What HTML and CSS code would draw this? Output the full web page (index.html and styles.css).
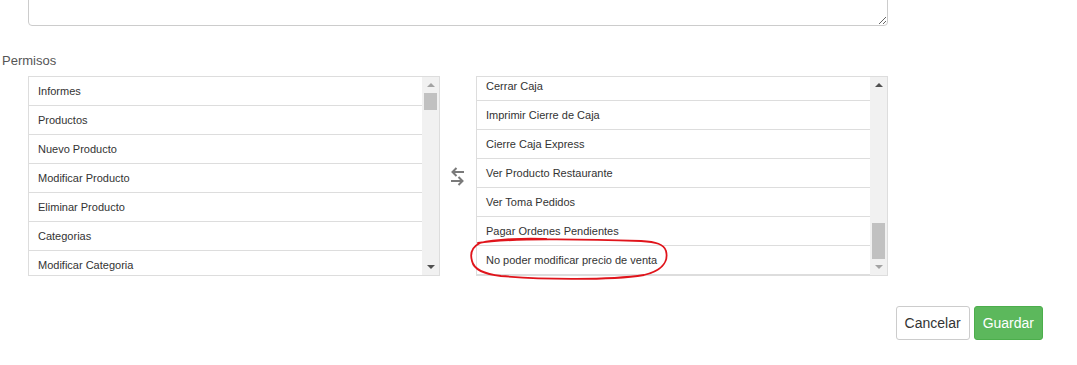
FILE: index.html
```html
<!DOCTYPE html>
<html lang="es">

<head>
  <meta charset="UTF-8">
  <meta name="viewport" content="width=device-width, initial-scale=1.0">
  <title>Permisos</title>
  <link rel="stylesheet" href="styles.css">
</head>

<body>
  <form class="page">
    <div class="notes-wrap">
      <textarea class="notes" name="Notas"></textarea>
    </div>

    <label class="perm-label">Permisos</label>

    <div class="dual-list">
      <div class="list-box">
        <ul class="items">
          <li>Informes</li>
          <li>Productos</li>
          <li>Nuevo Producto</li>
          <li>Modificar Producto</li>
          <li>Eliminar Producto</li>
          <li>Categorias</li>
          <li>Modificar Categoria</li>
        </ul>
        <div class="scrollbar at-top">
          <span class="arrow up off"></span>
          <div class="track"><div class="thumb small"></div></div>
          <span class="arrow down"></span>
        </div>
      </div>

      <div class="swap">
        <svg width="16" height="22" viewBox="0 0 16 22">
          <path d="M14 6 H2.5 M6.5 2 L2.5 6 L6.5 10" fill="none" stroke="#7a7a7a" stroke-width="2"/>
          <path d="M1 15 H12.5 M8.5 11 L12.5 15 L8.5 19" fill="none" stroke="#7a7a7a" stroke-width="2"/>
        </svg>
      </div>

      <div class="list-box">
        <ul class="items bottom">
          <li>Cerrar Caja</li>
          <li>Imprimir Cierre de Caja</li>
          <li>Cierre Caja Express</li>
          <li>Ver Producto Restaurante</li>
          <li>Ver Toma Pedidos</li>
          <li>Pagar Ordenes Pendientes</li>
          <li>No poder modificar precio de venta</li>
        </ul>
        <div class="scrollbar at-bottom">
          <span class="arrow up"></span>
          <div class="track"><div class="thumb big"></div></div>
          <span class="arrow down off"></span>
        </div>
      </div>
    </div>

    <div class="actions">
      <button type="button" class="btn btn-default">Cancelar</button>
      <button type="submit" class="btn btn-success">Guardar</button>
    </div>

    <!-- marca roja sobre el permiso nuevo -->
    <svg class="mark" width="220" height="50" viewBox="0 0 220 50">
      <path d="M12 6 C40 1 120 2 175 4 C190 5 198 7 200 14 C203 26 194 34 178 38 C140 44 70 42 35 39 C18 37 8 33 6 24 C4 17 6 10 14 6 C30 2 60 1 80 2"
        fill="none" stroke="#e0141b" stroke-width="1.8" stroke-linecap="round"/>
    </svg>
  </form>
</body>

</html>
```

FILE: styles.css
```css
/* Page */

body {
  margin: 0;
  font-family: "Liberation Sans", Arial, sans-serif;
  color: #333;
  background: #fff;
}

.page {
  position: relative;
  width: 1077px;
  height: 365px;
}

/* Textarea, only its lower edge is on screen */

.notes-wrap {
  height: 26px;
  margin-left: 28px;
  width: 860px;
  overflow: hidden;
  display: flex;
  flex-direction: column;
  justify-content: flex-end;
}

.notes {
  flex: none;
  height: 80px;
  width: 100%;
  box-sizing: border-box;
  border: 1px solid #ccc;
  border-radius: 4px;
  resize: vertical;
}

.perm-label {
  display: block;
  margin: 26px 0 0 2px;
  font-size: 13px;
  line-height: 18px;
  color: #555;
}

/* Dual list */

.dual-list {
  display: flex;
  align-items: center;
  margin: 6px 0 0 28px;
}

.list-box {
  display: flex;
  width: 412px;
  height: 200px;
  box-sizing: border-box;
  border: 1px solid #ddd;
  overflow: hidden;
}

.items {
  flex: 1;
  display: flex;
  flex-direction: column;
  margin: 0;
  padding: 0;
  list-style: none;
  overflow: hidden;
}

.items.bottom {
  justify-content: flex-end;
}

.items li {
  flex: none;
  height: 28px;
  line-height: 28px;
  padding-left: 9px;
  border-bottom: 1px solid #ddd;
  font-size: 11px;
  color: #333;
  white-space: nowrap;
}

.swap {
  width: 36px;
  display: flex;
  justify-content: center;
  padding-top: 2px;
}

/* Scrollbar */

.scrollbar {
  width: 17px;
  background: #f1f1f1;
  display: flex;
  flex-direction: column;
}

.track {
  flex: 1;
  display: flex;
  flex-direction: column;
  align-items: center;
}

.at-bottom .track {
  justify-content: flex-end;
}

.thumb {
  width: 13px;
  background: #c1c1c1;
}

.thumb.small {
  height: 17px;
}

.thumb.big {
  height: 36px;
}

.arrow {
  height: 16px;
  display: flex;
  align-items: center;
  justify-content: center;
}

.arrow::after {
  content: "";
  border-left: 4px solid transparent;
  border-right: 4px solid transparent;
}

.arrow.up::after {
  border-bottom: 4px solid #505050;
}

.arrow.down::after {
  border-top: 4px solid #505050;
}

.arrow.up.off::after {
  border-bottom-color: #a3a3a3;
}

.arrow.down.off::after {
  border-top-color: #a3a3a3;
}

/* Buttons */

.actions {
  display: flex;
  justify-content: flex-end;
  gap: 4px;
  margin: 30px 34px 0 0;
}

.btn {
  font-family: "Liberation Sans", Arial, sans-serif;
  font-size: 14px;
  line-height: 20px;
  padding: 6px 8px;
  border: 1px solid transparent;
  border-radius: 3px;
  cursor: pointer;
}

.btn-default {
  background-color: #fff;
  border-color: #ccc;
  color: #333;
}

.btn-success {
  background-color: #5cb85c;
  border-color: #4cae4c;
  color: #fff;
}

/* Hand-drawn mark over the list */

.mark {
  position: absolute;
  left: 466px;
  top: 237px;
}
```
